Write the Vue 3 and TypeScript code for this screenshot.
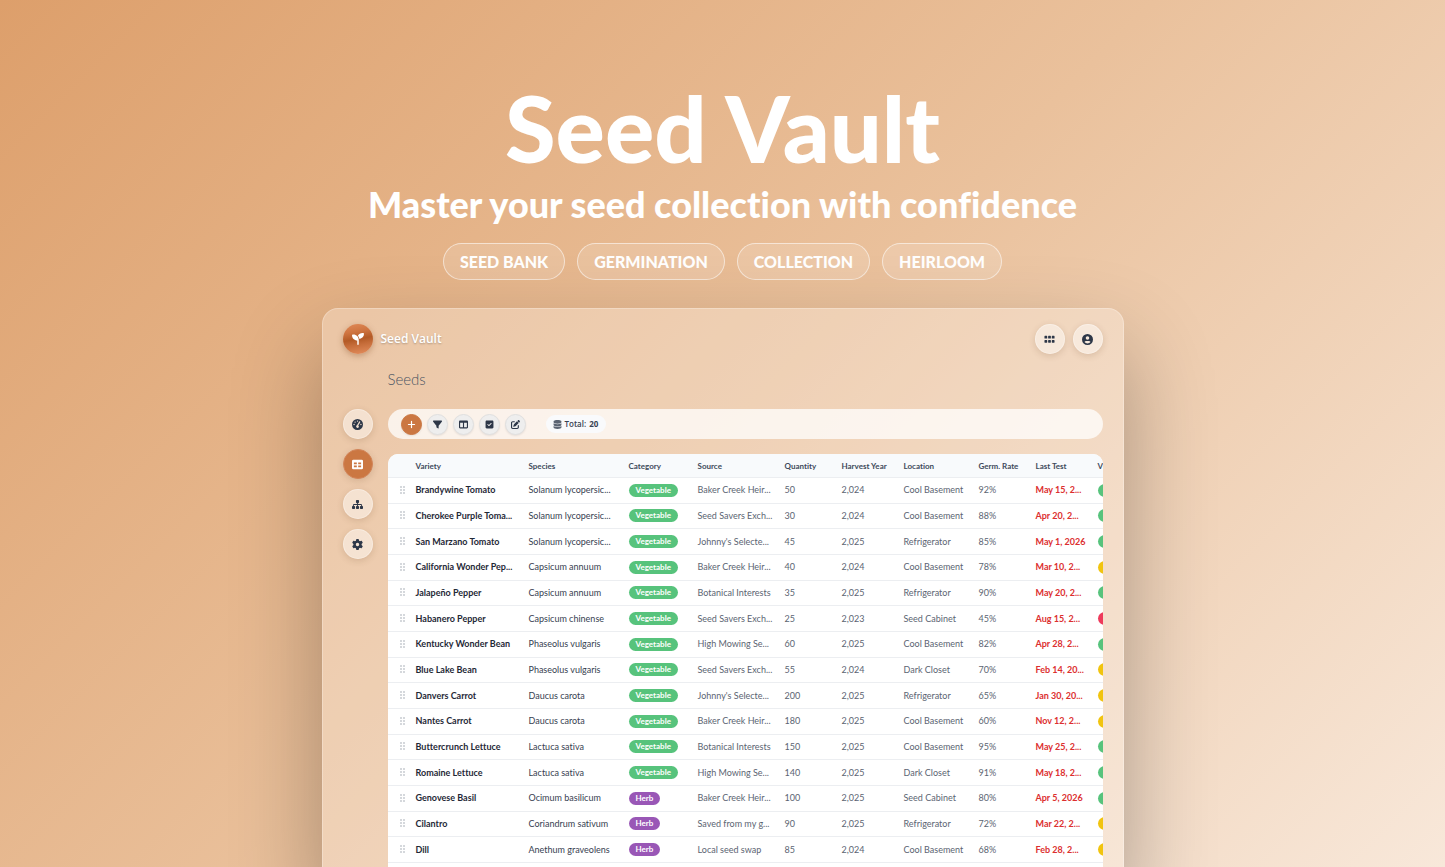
<script setup lang="ts">
interface Glyph {
  box: string
  path: string
}

interface Seed {
  variety: string
  species: string
  category: 'Vegetable' | 'Herb'
  source: string
  quantity: number
  year: string
  location: string
  rate: number
  lastTest: string
  viability: 'good' | 'fair' | 'poor'
}

const glyphs: Record<string, Glyph> = {
  seedling: {
    box: '0 0 512 512',
    path: 'M512 32c0 113.6-84.6 207.5-194.2 222c-7.1-53.4-30.6-101.6-65.3-139.3C290.8 46.3 364 0 448 0h32c17.7 0 32 14.3 32 32zM0 96C0 78.3 14.3 64 32 64H64c123.7 0 224 100.3 224 224v32V480c0 17.7-14.3 32-32 32s-32-14.3-32-32V320C100.3 320 0 219.7 0 96z',
  },
  apps: {
    box: '0 0 24 24',
    path: 'M2 4h4a1 1 0 0 1 1 1v4a1 1 0 0 1-1 1H2a1 1 0 0 1-1-1V5a1 1 0 0 1 1-1zM10 4h4a1 1 0 0 1 1 1v4a1 1 0 0 1-1 1h-4a1 1 0 0 1-1-1V5a1 1 0 0 1 1-1zM18 4h4a1 1 0 0 1 1 1v4a1 1 0 0 1-1 1h-4a1 1 0 0 1-1-1V5a1 1 0 0 1 1-1zM2 13h4a1 1 0 0 1 1 1v4a1 1 0 0 1-1 1H2a1 1 0 0 1-1-1v-4a1 1 0 0 1 1-1zM10 13h4a1 1 0 0 1 1 1v4a1 1 0 0 1-1 1h-4a1 1 0 0 1-1-1v-4a1 1 0 0 1 1-1zM18 13h4a1 1 0 0 1 1 1v4a1 1 0 0 1-1 1h-4a1 1 0 0 1-1-1v-4a1 1 0 0 1 1-1z',
  },
  user: {
    box: '0 0 512 512',
    path: 'M256 0a256 256 0 1 0 0 512a256 256 0 1 0 0-512zM256 104a84 84 0 1 1 0 168a84 84 0 1 1 0-168zM256 440c-58 0-108-26-140-68c14-36 42-52 76-52h128c34 0 62 16 76 52c-32 42-82 68-140 68z',
  },
  gauge: {
    box: '0 0 512 512',
    path: 'M256 0a256 256 0 1 0 0 512a256 256 0 1 0 0-512zM256 64a32 32 0 1 1 0 64a32 32 0 1 1 0-64zM144 112a32 32 0 1 1 0 64a32 32 0 1 1 0-64zM96 224a32 32 0 1 1 0 64a32 32 0 1 1 0-64zM416 224a32 32 0 1 1 0 64a32 32 0 1 1 0-64zM256 416a64 64 0 0 1-25-123L335 122c8-14 24-18 36-11c14 8 18 22 12 36L292 299a64 64 0 0 1-36 117z',
  },
  table: {
    box: '0 0 512 512',
    path: 'M64 32h384a64 64 0 0 1 64 64v320a64 64 0 0 1-64 64H64a64 64 0 0 1-64-64V96a64 64 0 0 1 64-64zM88 160v80h136v-80zM288 160v80h136v-80zM88 304v80h136v-80zM288 304v80h136v-80z',
  },
  sitemap: {
    box: '0 0 576 512',
    path: 'M248 24h80a40 40 0 0 1 40 40v80a40 40 0 0 1-40 40h-16v48h152a64 64 0 0 1 64 64v32h8a40 40 0 0 1 40 40v80a40 40 0 0 1-40 40h-80a40 40 0 0 1-40-40v-80a40 40 0 0 1 40-40h24v-32a16 16 0 0 0-16-16H312v48h16a40 40 0 0 1 40 40v80a40 40 0 0 1-40 40h-80a40 40 0 0 1-40-40v-80a40 40 0 0 1 40-40h16v-48H112a16 16 0 0 0-16 16v32h24a40 40 0 0 1 40 40v80a40 40 0 0 1-40 40H40a40 40 0 0 1-40-40v-80a40 40 0 0 1 40-40h8v-32a64 64 0 0 1 64-64h152v-48h-16a40 40 0 0 1-40-40V64a40 40 0 0 1 40-40z',
  },
  gear: {
    box: '0 0 512 512',
    path: 'M495.9 166.6c3.2 8.7 .5 18.4-6.4 24.6l-43.3 39.4c1.1 8.3 1.7 16.8 1.7 25.4s-.6 17.1-1.7 25.4l43.3 39.4c6.9 6.2 9.6 15.9 6.4 24.6c-4.4 11.9-9.7 23.3-15.8 34.3l-4.7 8.1c-6.6 11-14 21.4-22.1 31.2c-5.9 7.2-15.7 9.6-24.5 6.8l-55.7-17.7c-13.4 10.3-28.2 18.9-44 25.4l-12.5 57.1c-2 9.1-9 16.3-18.2 17.8c-13.8 2.3-28 3.5-42.5 3.5s-28.7-1.2-42.5-3.5c-9.2-1.5-16.2-8.7-18.2-17.8l-12.5-57.1c-15.8-6.5-30.6-15.1-44-25.4L83.1 425.9c-8.8 2.8-18.6 .3-24.5-6.8c-8.1-9.8-15.5-20.2-22.1-31.2l-4.7-8.1c-6.1-11-11.4-22.4-15.8-34.3c-3.2-8.7-.5-18.4 6.4-24.6l43.3-39.4C64.6 273.1 64 264.6 64 256s.6-17.1 1.7-25.4L22.4 191.2c-6.9-6.2-9.6-15.9-6.4-24.6c4.4-11.9 9.7-23.3 15.8-34.3l4.7-8.1c6.6-11 14-21.4 22.1-31.2c5.9-7.2 15.7-9.6 24.5-6.8l55.7 17.7c13.4-10.3 28.2-18.9 44-25.4l12.5-57.1c2-9.1 9-16.3 18.2-17.8C227.3 1.2 241.5 0 256 0s28.7 1.2 42.5 3.5c9.2 1.5 16.2 8.7 18.2 17.8l12.5 57.1c15.8 6.5 30.6 15.1 44 25.4l55.7-17.7c8.8-2.8 18.6-.3 24.5 6.8c8.1 9.8 15.5 20.2 22.1 31.2l4.7 8.1c6.1 11 11.4 22.4 15.8 34.3zM256 336a80 80 0 1 0 0-160 80 80 0 1 0 0 160z',
  },
  plus: {
    box: '0 0 512 512',
    path: 'M256 48a34 34 0 0 1 34 34v140h140a34 34 0 0 1 0 68H290v140a34 34 0 0 1-68 0V290H82a34 34 0 0 1 0-68h140V82a34 34 0 0 1 34-34z',
  },
  filter: {
    box: '0 0 512 512',
    path: 'M3.9 54.9C10.5 40.9 24.5 32 40 32H472c15.5 0 29.5 8.9 36.1 22.9s4.6 30.5-5.2 42.5L320 320.9V448c0 12.1-6.8 23.2-17.7 28.6s-23.8 4.3-33.5-3l-64-48c-8.1-6-12.8-15.5-12.8-25.6V320.9L9 97.3C-.7 85.4-2.8 68.8 3.9 54.9z',
  },
  columns: {
    box: '0 0 512 512',
    path: 'M0 96C0 60.7 28.7 32 64 32H448c35.3 0 64 28.7 64 64V416c0 35.3-28.7 64-64 64H64c-35.3 0-64-28.7-64-64V96zm64 64V416H224V160H64zm384 0H288V416H448V160z',
  },
  check: {
    box: '-32 0 512 512',
    path: 'M64 32C28.7 32 0 60.7 0 96V416c0 35.3 28.7 64 64 64H384c35.3 0 64-28.7 64-64V96c0-35.3-28.7-64-64-64H64zM337 209L209 337c-9.4 9.4-24.6 9.4-33.9 0l-64-64c-9.4-9.4-9.4-24.6 0-33.9s24.6-9.4 33.9 0l47 47L303 175c9.4-9.4 24.6-9.4 33.9 0s9.4 24.6 0 33.9z',
  },
  edit: {
    box: '0 0 512 512',
    path: 'M471.6 21.7c-21.9-21.9-57.3-21.9-79.2 0L362.3 51.7l97.9 97.9 30.1-30.1c21.9-21.9 21.9-57.3 0-79.2L471.6 21.7zm-299.2 220c-6.1 6.1-10.8 13.6-13.5 21.9l-29.6 88.8c-2.9 8.6-.6 18.1 5.8 24.6s15.9 8.7 24.6 5.8l88.8-29.6c8.2-2.7 15.7-7.4 21.9-13.5L437.7 172.3 339.7 74.3 172.4 241.7zM96 64C43 64 0 107 0 160V416c0 53 43 96 96 96H352c53 0 96-43 96-96V320c0-17.7-14.3-32-32-32s-32 14.3-32 32v96c0 17.7-14.3 32-32 32H96c-17.7 0-32-14.3-32-32V160c0-17.7 14.3-32 32-32h96c17.7 0 32-14.3 32-32s-14.3-32-32-32H96z',
  },
  database: {
    box: '0 0 448 512',
    path: 'M448 80v48c0 44.2-100.3 80-224 80S0 172.2 0 128V80C0 35.8 100.3 0 224 0S448 35.8 448 80zM393.2 214.7c20.8-7.4 39.9-16.9 54.8-28.6V288c0 44.2-100.3 80-224 80S0 332.2 0 288V186.1c14.9 11.8 34 21.2 54.8 28.6C99.7 230.7 159.5 240 224 240s124.3-9.3 169.2-25.3zM0 346.1c14.9 11.8 34 21.2 54.8 28.6C99.7 390.7 159.5 400 224 400s124.3-9.3 169.2-25.3c20.8-7.4 39.9-16.9 54.8-28.6V432c0 44.2-100.3 80-224 80S0 476.2 0 432V346.1z',
  },
}

const tags = ['SEED BANK', 'GERMINATION', 'COLLECTION', 'HEIRLOOM']

const navItems = [
  { icon: 'gauge', label: 'Dashboard', active: false },
  { icon: 'table', label: 'Seeds', active: true },
  { icon: 'sitemap', label: 'Structure', active: false },
  { icon: 'gear', label: 'Settings', active: false },
]

const tools = [
  { icon: 'plus', label: 'Add', primary: true },
  { icon: 'filter', label: 'Filter', primary: false },
  { icon: 'columns', label: 'Columns', primary: false },
  { icon: 'check', label: 'Select', primary: false },
  { icon: 'edit', label: 'Edit', primary: false },
]

const headings = ['Variety', 'Species', 'Category', 'Source', 'Quantity', 'Harvest Year', 'Location', 'Germ. Rate', 'Last Test', 'Viability']

const row = (
  variety: string,
  species: string,
  category: Seed['category'],
  source: string,
  quantity: number,
  year: string,
  location: string,
  rate: number,
  lastTest: string,
  viability: Seed['viability'],
): Seed => ({ variety, species, category, source, quantity, year, location, rate, lastTest, viability })

const seeds: Seed[] = [
  row('Brandywine Tomato', 'Solanum lycopersic...', 'Vegetable', 'Baker Creek Heir...', 50, '2,024', 'Cool Basement', 92, 'May 15, 2...', 'good'),
  row('Cherokee Purple Toma...', 'Solanum lycopersic...', 'Vegetable', 'Seed Savers Exch...', 30, '2,024', 'Cool Basement', 88, 'Apr 20, 2...', 'good'),
  row('San Marzano Tomato', 'Solanum lycopersic...', 'Vegetable', "Johnny's Selecte...", 45, '2,025', 'Refrigerator', 85, 'May 1, 2026', 'good'),
  row('California Wonder Pep...', 'Capsicum annuum', 'Vegetable', 'Baker Creek Heir...', 40, '2,024', 'Cool Basement', 78, 'Mar 10, 2...', 'fair'),
  row('Jalapeño Pepper', 'Capsicum annuum', 'Vegetable', 'Botanical Interests', 35, '2,025', 'Refrigerator', 90, 'May 20, 2...', 'good'),
  row('Habanero Pepper', 'Capsicum chinense', 'Vegetable', 'Seed Savers Exch...', 25, '2,023', 'Seed Cabinet', 45, 'Aug 15, 2...', 'poor'),
  row('Kentucky Wonder Bean', 'Phaseolus vulgaris', 'Vegetable', 'High Mowing Se...', 60, '2,025', 'Cool Basement', 82, 'Apr 28, 2...', 'good'),
  row('Blue Lake Bean', 'Phaseolus vulgaris', 'Vegetable', 'Seed Savers Exch...', 55, '2,024', 'Dark Closet', 70, 'Feb 14, 20...', 'fair'),
  row('Danvers Carrot', 'Daucus carota', 'Vegetable', "Johnny's Selecte...", 200, '2,025', 'Refrigerator', 65, 'Jan 30, 20...', 'fair'),
  row('Nantes Carrot', 'Daucus carota', 'Vegetable', 'Baker Creek Heir...', 180, '2,025', 'Cool Basement', 60, 'Nov 12, 2...', 'fair'),
  row('Buttercrunch Lettuce', 'Lactuca sativa', 'Vegetable', 'Botanical Interests', 150, '2,025', 'Cool Basement', 95, 'May 25, 2...', 'good'),
  row('Romaine Lettuce', 'Lactuca sativa', 'Vegetable', 'High Mowing Se...', 140, '2,025', 'Dark Closet', 91, 'May 18, 2...', 'good'),
  row('Genovese Basil', 'Ocimum basilicum', 'Herb', 'Baker Creek Heir...', 100, '2,025', 'Seed Cabinet', 80, 'Apr 5, 2026', 'good'),
  row('Cilantro', 'Coriandrum sativum', 'Herb', 'Saved from my g...', 90, '2,025', 'Refrigerator', 72, 'Mar 22, 2...', 'fair'),
  row('Dill', 'Anethum graveolens', 'Herb', 'Local seed swap', 85, '2,024', 'Cool Basement', 68, 'Feb 28, 2...', 'fair'),
]
</script>

<template>
  <main class="page">
    <header class="hero">
      <h1>Seed Vault</h1>
      <p class="tagline">Master your seed collection with confidence</p>
      <ul class="tags">
        <li v-for="tag in tags" :key="tag">{{ tag }}</li>
      </ul>
    </header>

    <section class="window">
      <div class="topbar">
        <div class="brand">
          <span class="logo">
            <svg :viewBox="glyphs.seedling.box" aria-hidden="true"><path :d="glyphs.seedling.path" /></svg>
          </span>
          <span class="brand-name">Seed Vault</span>
        </div>
        <div class="top-actions">
          <button v-for="name in ['apps', 'user']" :key="name" type="button" class="round" :aria-label="name">
            <svg :viewBox="glyphs[name].box" aria-hidden="true"><path fill-rule="evenodd" :d="glyphs[name].path" /></svg>
          </button>
        </div>
      </div>

      <div class="body">
        <nav class="sidebar">
          <button
            v-for="item in navItems"
            :key="item.icon"
            type="button"
            class="round"
            :class="{ active: item.active }"
            :aria-label="item.label"
          >
            <svg :viewBox="glyphs[item.icon].box" aria-hidden="true"><path fill-rule="evenodd" :d="glyphs[item.icon].path" /></svg>
          </button>
        </nav>

        <div class="content">
          <h2>Seeds</h2>

          <div class="toolbar">
            <button
              v-for="tool in tools"
              :key="tool.icon"
              type="button"
              class="tool"
              :class="{ primary: tool.primary }"
              :aria-label="tool.label"
            >
              <svg :viewBox="glyphs[tool.icon].box" aria-hidden="true"><path fill-rule="evenodd" :d="glyphs[tool.icon].path" /></svg>
            </button>
            <span class="total">
              <svg :viewBox="glyphs.database.box" aria-hidden="true"><path :d="glyphs.database.path" /></svg>
              Total: <b>20</b>
            </span>
          </div>

          <div class="sheet">
            <table>
              <colgroup>
                <col class="c-grip" />
                <col class="c-variety" />
                <col class="c-species" />
                <col class="c-category" />
                <col class="c-source" />
                <col class="c-quantity" />
                <col class="c-year" />
                <col class="c-location" />
                <col class="c-rate" />
                <col class="c-test" />
                <col class="c-viability" />
              </colgroup>
              <thead>
                <tr>
                  <th></th>
                  <th v-for="heading in headings" :key="heading" scope="col">{{ heading }}</th>
                </tr>
              </thead>
              <tbody>
                <tr v-for="seed in seeds" :key="seed.variety">
                  <td class="grip-cell">
                    <svg class="grip" viewBox="0 0 6 9" aria-hidden="true">
                      <path d="M0 0h2v2H0zM3 0h2v2H3zM0 3h2v2H0zM3 3h2v2H3zM0 6h2v2H0zM3 6h2v2H3z" />
                    </svg>
                  </td>
                  <td class="variety">{{ seed.variety }}</td>
                  <td class="species">{{ seed.species }}</td>
                  <td><span class="pill" :class="seed.category.toLowerCase()">{{ seed.category }}</span></td>
                  <td>{{ seed.source }}</td>
                  <td>{{ seed.quantity }}</td>
                  <td>{{ seed.year }}</td>
                  <td>{{ seed.location }}</td>
                  <td>{{ seed.rate }}%</td>
                  <td class="test">{{ seed.lastTest }}</td>
                  <td><span class="pill status" :class="seed.viability"></span></td>
                </tr>
              </tbody>
            </table>
          </div>
        </div>
      </div>
    </section>
  </main>
</template>

<style>
body {
  margin: 0;
}
</style>

<style scoped>
.page {
  box-sizing: border-box;
  height: 100vh;
  min-height: 600px;
  padding: 80px 16px 0;
  overflow: hidden;
  display: flex;
  flex-direction: column;
  align-items: center;
  background: linear-gradient(135deg, #dd9f6b 0%, #eac19c 50%, #f8e8da 100%);
  font-family: Lato, "Open Sans", sans-serif;
  font-variant-ligatures: none;
}

.hero {
  display: flex;
  flex-direction: column;
  align-items: center;
  color: #fff;
  font-weight: 700;
}

h1 {
  margin: 0 0 4px;
  font-size: 92px;
  line-height: 96px;
  font-weight: 900;
}

.tagline {
  margin: 0;
  font-size: 36px;
  line-height: 48px;
  font-weight: 900;
}

.tags {
  display: flex;
  gap: 12px;
  margin: 15px 0 0;
  padding: 0;
  list-style: none;
}

.tags li {
  padding: 0 16px;
  border: 1px solid rgba(255, 255, 255, 0.55);
  border-radius: 19px;
  background: rgba(255, 255, 255, 0.14);
  font-size: 16px;
  line-height: 35px;
  font-weight: 900;
}

.window {
  box-sizing: border-box;
  flex: 1 0 auto;
  width: 100%;
  max-width: 802px;
  margin-top: 28px;
  padding: 15px 20px 0;
  border: 1px solid rgba(255, 255, 255, 0.26);
  border-bottom: 0;
  border-radius: 16px 16px 0 0;
  background: rgba(255, 255, 255, 0.26);
  box-shadow: 0 42px 90px rgba(0, 0, 0, 0.3);
}

.topbar,
.brand,
.top-actions,
.toolbar {
  display: flex;
  align-items: center;
}

.topbar {
  justify-content: space-between;
}

.brand,
.top-actions {
  gap: 8px;
}

.logo {
  display: grid;
  place-items: center;
  width: 30px;
  height: 30px;
  border-radius: 50%;
  background: linear-gradient(170deg, #e08a58 0%, #cf7440 28%, #b35a26 50%, #c66d3a 66%, #e58f5f 100%);
  box-shadow: 0 2px 6px rgba(120, 60, 20, 0.35);
}

.logo svg {
  width: 12px;
  height: 12px;
  fill: #fff;
}

.brand-name {
  color: #fff;
  font-family: "Open Sans", "Noto Sans", sans-serif;
  font-size: 12px;
  line-height: 16px;
  font-weight: 600;
  text-shadow: 0 1px 2px rgba(0, 0, 0, 0.25);
}

button {
  display: grid;
  place-items: center;
  box-sizing: border-box;
  padding: 0;
  border-radius: 50%;
  color: #2d3748;
  cursor: pointer;
}

svg {
  display: block;
  fill: currentColor;
}

.round {
  width: 30px;
  height: 30px;
  border: 1px solid rgba(255, 255, 255, 0.3);
  background: rgba(255, 255, 255, 0.45);
  box-shadow: 0 2px 7px rgba(90, 50, 20, 0.16);
}

.round svg {
  width: 11px;
  height: 11px;
}

.round.active {
  border-color: #d3855a;
  background: #cb7742;
  color: #fff;
}

.body {
  display: flex;
  gap: 15px;
}

.sidebar {
  display: flex;
  flex-direction: column;
  gap: 10px;
  padding-top: 55px;
}

.content {
  flex: 1;
  min-width: 0;
}

h2 {
  margin: 15px 0 19px;
  color: #4b5563;
  font-size: 15px;
  line-height: 21px;
  font-weight: 300;
}

.toolbar {
  gap: 5px;
  height: 30px;
  padding: 0 13px;
  border-radius: 15px;
  background: rgba(255, 255, 255, 0.75);
}

.tool {
  width: 21px;
  height: 21px;
  border: 1px solid #e0e0e0;
  background: #eeeeee;
  box-shadow: 0 1px 2px rgba(0, 0, 0, 0.08);
}

.tool svg {
  width: 9px;
  height: 9px;
}

.tool.primary {
  border-color: #cb7742;
  background: #cb7742;
  color: #fff;
}

.total {
  display: flex;
  align-items: center;
  gap: 3px;
  margin-left: 15px;
  padding: 0 8px 0 7px;
  border-radius: 9px;
  background: #f9fafc;
  color: #374151;
  font-family: "Open Sans", "Noto Sans", sans-serif;
  font-size: 8px;
  line-height: 18px;
  font-weight: 600;
}

.total svg {
  width: 9px;
  height: 9px;
  color: #5b6472;
}

.total b {
  font-weight: 700;
}

.sheet {
  margin-top: 15px;
  overflow: hidden;
  border-radius: 10px 10px 0 0;
  background: #fff;
  min-height: 430px;
}

table {
  width: 772px;
  height: 409px;
  table-layout: fixed;
  border-collapse: separate;
  border-spacing: 0;
  color: #5b6472;
  font-size: 9px;
  line-height: 14px;
}

.c-grip { width: 21px; }
.c-variety { width: 113px; }
.c-species { width: 100px; }
.c-category { width: 69px; }
.c-source { width: 87px; }
.c-quantity { width: 57px; }
.c-year { width: 62px; }
.c-location { width: 75px; }
.c-rate { width: 57px; }
.c-test { width: 62px; }
.c-viability { width: 69px; }

th,
td {
  padding: 0 0 0 7px;
  border-bottom: 1px solid #eceef1;
  text-align: left;
  white-space: nowrap;
}

th {
  height: 23px;
  background: #f8fafc;
  color: #404a5b;
  font-size: 8px;
  font-weight: 700;
}

.grip-cell {
  padding-left: 12px;
}

.grip {
  width: 6px;
  height: 9px;
  fill: #d5d8dc;
}

.variety {
  color: #1f2937;
  font-weight: 700;
}

.species {
  color: #374151;
}

.test {
  color: #dc2f2f;
  font-weight: 700;
}

.pill {
  display: block;
  width: fit-content;
  padding: 0 7px;
  border-radius: 7px;
  color: #fff;
  font-size: 8px;
  line-height: 13px;
  font-weight: 700;
}

.vegetable,
.good {
  background: #57c37c;
}

.herb {
  background: #9957b6;
}

.fair {
  background: #f1c40f;
}

.poor {
  background: #ee3a5b;
}

.status {
  width: 30px;
  height: 13px;
}
</style>
